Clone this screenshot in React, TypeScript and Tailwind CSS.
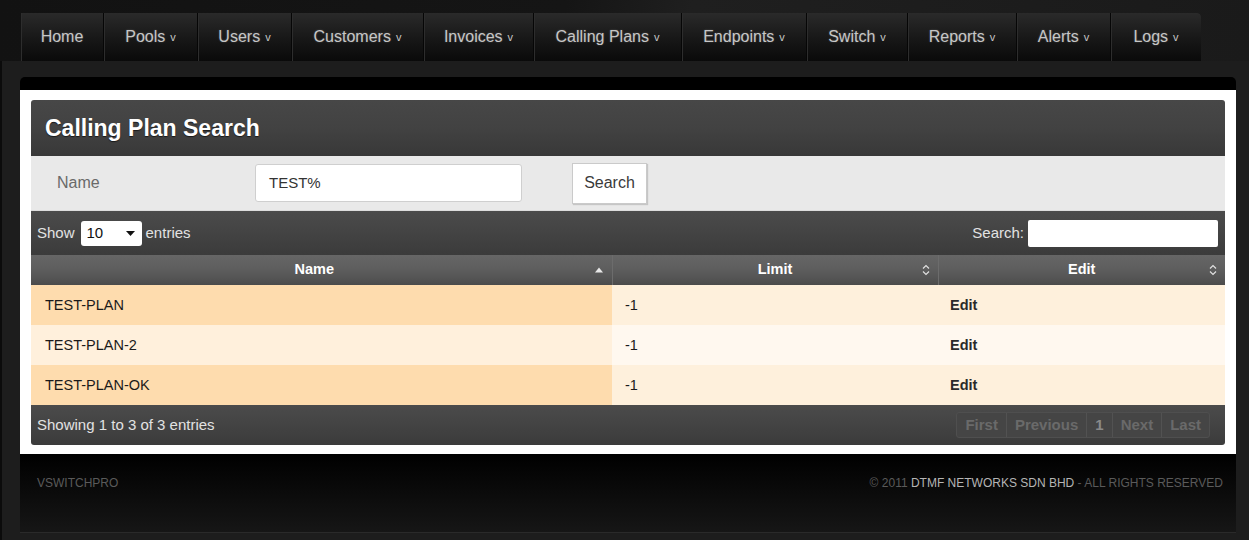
import React from 'react';

const font = { fontFamily: '"Liberation Sans", Arial, sans-serif' };

const navItems = [
  { label: 'Home', width: 'w-[83px]', menu: false },
  { label: 'Pools', width: 'w-[94px]', menu: true },
  { label: 'Users', width: 'w-[94px]', menu: true },
  { label: 'Customers', width: 'w-[132px]', menu: true },
  { label: 'Invoices', width: 'w-[110px]', menu: true },
  { label: 'Calling Plans', width: 'w-[148px]', menu: true },
  { label: 'Endpoints', width: 'w-[125px]', menu: true },
  { label: 'Switch', width: 'w-[101px]', menu: true },
  { label: 'Reports', width: 'w-[109px]', menu: true },
  { label: 'Alerts', width: 'w-[94px]', menu: true },
  { label: 'Logs', width: 'w-[90px]', menu: true },
];

const plans = [
  { name: 'TEST-PLAN', limit: '-1' },
  { name: 'TEST-PLAN-2', limit: '-1' },
  { name: 'TEST-PLAN-OK', limit: '-1' },
];

function SortAsc() {
  return (
    <svg width="8" height="6" viewBox="0 0 8 6" className="absolute right-[9px] top-[12px]">
      <path d="M0 5.5 L4 0.5 L8 5.5 Z" fill="#e8e8e8" />
    </svg>
  );
}

function SortBoth() {
  return (
    <svg width="8" height="12" viewBox="0 0 8 12" className="absolute right-[8px] top-[9px]">
      <path d="M1 4.5 L4 1.5 L7 4.5" fill="none" stroke="#e0e0e0" strokeWidth="1.2" />
      <path d="M1 7.5 L4 10.5 L7 7.5" fill="none" stroke="#e0e0e0" strokeWidth="1.2" />
    </svg>
  );
}

function TopNav() {
  return (
    <div className="flex h-[48px] ml-[21px] w-[1180px] rounded-tr-[4px] overflow-hidden">
      {navItems.map((item, i) => (
        <div
          key={item.label}
          className={`${item.width} h-full flex items-center justify-center bg-[linear-gradient(#2a2a2a,#171717_55%,#0a0a0a)] border-r border-[#060606] shadow-[inset_1px_0_0_#2d2d2d] ${
            i === navItems.length - 1 ? 'border-r-0 rounded-tr-[4px]' : ''
          }`}
        >
          <span className="text-[16px] text-[#c6c6c6] [text-shadow:0_0_2px_rgba(255,255,255,0.25)]">
            {item.label}
          </span>
          {item.menu && <span className="text-[11px] text-[#c6c6c6] ml-[5px]">v</span>}
        </div>
      ))}
    </div>
  );
}

function SearchForm() {
  return (
    <div className="h-[55px] bg-[#e9e9e9] border-b border-[#dcdcdc] flex items-center">
      <div className="w-[224px] pl-[26px] text-[16px] text-[#6a6a6a]">Name</div>
      <div className="w-[267px] h-[38px] bg-white border border-[#cfcfcf] rounded-[3px] flex items-center pl-[13px] text-[15px] text-[#333]">
        TEST%
      </div>
      <button className="ml-[50px] w-[75px] h-[41px] bg-white border border-[#cacaca] shadow-[1px_1px_1px_rgba(0,0,0,0.15)] text-[16px] text-[#3a3a3a]">
        Search
      </button>
    </div>
  );
}

function TableToolbar() {
  return (
    <div className="h-[44px] flex items-center justify-between pl-[6px] pr-[7px] bg-[linear-gradient(#4b4b4b,#444_45%,#3b3b3b)] text-[15px] text-[#e2e2e2]">
      <div className="flex items-center">
        <span>Show</span>
        <div className="ml-[6px] w-[61px] h-[25px] bg-white rounded-[3px] flex items-center justify-between pl-[6px] pr-[7px] text-[#111]">
          <span>10</span>
          <svg width="9" height="5" viewBox="0 0 9 5">
            <path d="M0 0 H9 L4.5 5 Z" fill="#111" />
          </svg>
        </div>
        <span className="ml-[4px]">entries</span>
      </div>
      <div className="flex items-center">
        <span>Search:</span>
        <div className="ml-[4px] w-[190px] h-[27px] bg-white rounded-[2px]" />
      </div>
    </div>
  );
}

function PlanTable() {
  return (
    <table className="w-full table-fixed border-collapse text-[14.5px]">
      <colgroup>
        <col className="w-[581px]" />
        <col className="w-[326px]" />
        <col />
      </colgroup>
      <thead>
        <tr className="h-[30px] bg-[linear-gradient(#666,#5e5e5e_45%,#555_75%,#4b4b4b)] text-white font-bold">
          <th className="relative text-center pr-[14px] font-bold">
            Name
            <SortAsc />
          </th>
          <th className="relative text-center font-bold border-l border-[#6c6c6c]">
            Limit
            <SortBoth />
          </th>
          <th className="relative text-center font-bold border-l border-[#6c6c6c]">
            Edit
            <SortBoth />
          </th>
        </tr>
      </thead>
      <tbody>
        {plans.map((p, i) => {
          const odd = i % 2 === 0;
          return (
            <tr key={p.name} className="h-[40px] text-[#1a1a1a]">
              <td className={`pl-[14px] pt-[2px] ${odd ? 'bg-[#fedcae]' : 'bg-[#fff0dc]'}`}>{p.name}</td>
              <td className={`pl-[13px] pt-[2px] ${odd ? 'bg-[#fef0dc]' : 'bg-[#fff8ef]'}`}>{p.limit}</td>
              <td className={`pl-[12px] pt-[2px] font-bold text-[#2a2a2a] ${odd ? 'bg-[#fef0dc]' : 'bg-[#fff8ef]'}`}>
                Edit
              </td>
            </tr>
          );
        })}
      </tbody>
    </table>
  );
}

function Pager() {
  const pages = ['First', 'Previous', '1', 'Next', 'Last'];
  return (
    <div className="flex h-[26px] border border-[#4f4f4f] rounded-[3px] bg-[#454545]">
      {pages.map((label, i) => (
        <div
          key={label}
          className={`px-[8px] flex items-center text-[15px] font-bold ${
            label === '1' ? 'text-[#8a8a8a]' : 'text-[#6a6a6a]'
          } ${i > 0 ? 'border-l border-[#525252]' : ''}`}
        >
          {label}
        </div>
      ))}
    </div>
  );
}

export default function App() {
  return (
    <div
      style={font}
      className="w-[1249px] h-[540px] overflow-hidden bg-[#1d1d1d] shadow-[inset_2px_2px_0_#0b0b0b]"
    >
      <div className="pt-[13px] bg-[linear-gradient(100deg,#121212,#151515_45%,#1f1f1f_55%,#1a1a1a)]">
        <TopNav />
      </div>

      <div className="mt-[16px] ml-[20px] w-[1216px] rounded-t-[5px] bg-black pt-[13px]">
        <div className="bg-white px-[11px] pt-[10px] pb-[9px]">
          <div className="rounded-t-[3px] overflow-hidden">
            <div className="h-[56px] flex items-center pl-[14px] bg-[linear-gradient(#474747,#424242_50%,#383838)]">
              <h1 className="text-[23px] font-bold text-white [text-shadow:0_1px_1px_rgba(0,0,0,0.6)]">
                Calling Plan Search
              </h1>
            </div>
            <SearchForm />
          </div>
          <TableToolbar />
          <PlanTable />
          <div className="h-[40px] flex items-center justify-between pl-[6px] pr-[15px] rounded-b-[3px] bg-[linear-gradient(#4b4b4b,#444_45%,#3b3b3b)]">
            <span className="text-[15px] text-[#e2e2e2]">Showing 1 to 3 of 3 entries</span>
            <Pager />
          </div>
        </div>

        <div className="h-[79px] bg-[linear-gradient(#000,#0b0b0b_50%,#161616)] border-b border-[#2a2a2a] flex justify-between pt-[20px] pl-[17px] pr-[13px] text-[12px] text-[#5a5a5a]">
          <span>VSWITCHPRO</span>
          <span>
            © 2011 <span className="text-[#b5b5b5]">DTMF NETWORKS SDN BHD</span> - ALL RIGHTS RESERVED
          </span>
        </div>
      </div>
    </div>
  );
}
